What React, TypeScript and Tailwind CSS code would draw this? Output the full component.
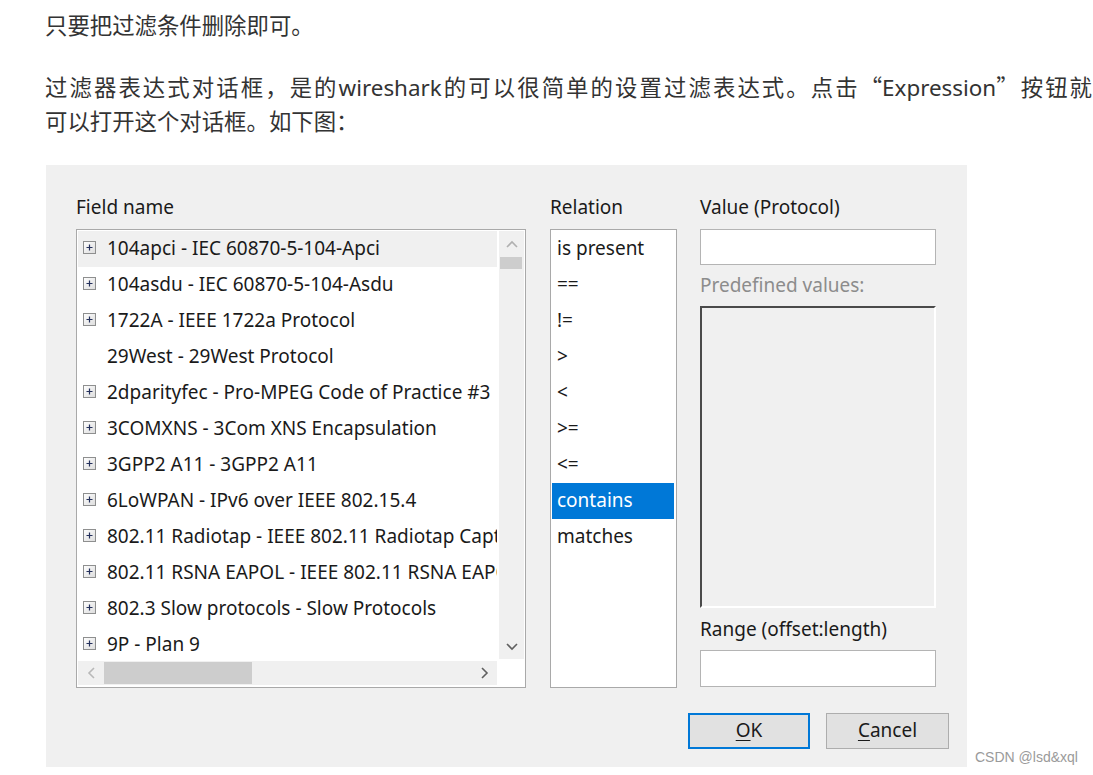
import React from "react";

const fields = [
  { name: "104apci - IEC 60870-5-104-Apci", tree: true },
  { name: "104asdu - IEC 60870-5-104-Asdu", tree: true },
  { name: "1722A - IEEE 1722a Protocol", tree: true },
  { name: "29West - 29West Protocol", tree: false },
  { name: "2dparityfec - Pro-MPEG Code of Practice #3", tree: true },
  { name: "3COMXNS - 3Com XNS Encapsulation", tree: true },
  { name: "3GPP2 A11 - 3GPP2 A11", tree: true },
  { name: "6LoWPAN - IPv6 over IEEE 802.15.4", tree: true },
  { name: "802.11 Radiotap - IEEE 802.11 Radiotap Capture header", tree: true },
  { name: "802.11 RSNA EAPOL - IEEE 802.11 RSNA EAPOL key dissection", tree: true },
  { name: "802.3 Slow protocols - Slow Protocols", tree: true },
  { name: "9P - Plan 9", tree: true },
];

const relations = ["is present", "==", "!=", ">", "<", ">=", "<=", "contains", "matches"];

function PlusBox() {
  return (
    <svg width="13" height="13" viewBox="0 0 13 13" className="shrink-0">
      <defs>
        <linearGradient id="pb" x1="0" y1="0" x2="1" y2="1">
          <stop offset="0" stopColor="#ffffff" />
          <stop offset="1" stopColor="#dcdcdc" />
        </linearGradient>
      </defs>
      <rect x="0.5" y="0.5" width="12" height="12" fill="url(#pb)" stroke="#8e8f8f" />
      <path d="M3.5 6.5H9.5M6.5 3.5V9.5" stroke="#24305c" strokeWidth="1.2" />
    </svg>
  );
}

function Chevron({ dir, color }: { dir: "up" | "down" | "left" | "right"; color: string }) {
  const d = {
    up: "M1 7L6 2L11 7",
    down: "M1 2L6 7L11 2",
    left: "M7 1L2 6L7 11",
    right: "M2 1L7 6L2 11",
  }[dir];
  const vertical = dir === "up" || dir === "down";
  return (
    <svg width={vertical ? 12 : 9} height={vertical ? 9 : 12} viewBox={vertical ? "0 0 12 9" : "0 0 9 12"}>
      <path d={d} fill="none" stroke={color} strokeWidth="1.6" />
    </svg>
  );
}

export default function App() {
  const cjk = { fontFamily: '"Noto Sans", "Noto Sans CJK SC", sans-serif' };
  return (
    <div className="h-[775px] w-[1093px] overflow-hidden bg-white pl-[45px] pt-[9px] text-[22.4px] leading-[34px] text-[#333]" style={cjk}>
      <p className="whitespace-nowrap">只要把过滤条件删除即可。</p>
      <p className="mt-[26px]">
        <span className="block w-[1047px] whitespace-nowrap text-justify [text-align-last:justify]">
          过滤器表达式对话框，是的wireshark的可以很简单的设置过滤表达式。点击<span className="font-['Noto_Sans_CJK_SC']">“</span>Expression<span className="font-['Noto_Sans_CJK_SC']">”</span>按钮就
        </span>
        <span className="block whitespace-nowrap">可以打开这个对话框。如下图：</span>
      </p>

      <div className="mt-[26px] flex items-end pl-px">
        {/* Dialog */}
        <div className="flex h-[602px] w-[921px] shrink-0 flex-col bg-[#f0f0f0] pl-[30px] pt-[30px] font-['Noto_Sans'] text-[19px] leading-[24px] text-[#1a1a1a]">
          <div className="flex">
            {/* Field name */}
            <div className="w-[450px]">
              <div className="h-[24px]">Field name</div>
              <div className="mt-[10px] h-[459px] border border-[#a9a9a9] bg-white p-px">
                <div className="flex h-[428px]">
                  <div className="h-[428px] w-[419px] overflow-hidden">
                    {fields.map((f, i) => (
                      <div
                        key={f.name}
                        className={`flex h-[36px] items-center gap-[11px] whitespace-nowrap pb-[3px] pl-[5px] ${i === 0 ? "bg-[#f0f0f0]" : ""}`}
                      >
                        {f.tree ? <PlusBox /> : <span className="w-[13px] shrink-0" />}
                        <span>{f.name}</span>
                      </div>
                    ))}
                  </div>
                  <div className="ml-[2px] flex h-[428px] w-[25px] flex-col bg-[#f0f0f0]">
                    <div className="flex h-[26px] items-center justify-center">
                      <Chevron dir="up" color="#b0b0b0" />
                    </div>
                    <div className="ml-px h-[12px] w-[22px] bg-[#cdcdcd]" />
                    <div className="flex-1" />
                    <div className="flex h-[26px] items-center justify-center">
                      <Chevron dir="down" color="#606060" />
                    </div>
                  </div>
                </div>
                <div className="mt-[2px] flex h-[24px] w-[419px] items-center bg-[#f0f0f0]">
                  <div className="flex w-[26px] justify-center">
                    <Chevron dir="left" color="#b8b8b8" />
                  </div>
                  <div className="h-[22px] w-[148px] bg-[#cdcdcd]" />
                  <div className="flex-1" />
                  <div className="flex w-[26px] justify-center">
                    <Chevron dir="right" color="#606060" />
                  </div>
                </div>
              </div>
            </div>

            {/* Relation */}
            <div className="ml-[24px] w-[127px]">
              <div className="h-[24px]">Relation</div>
              <div className="mt-[10px] h-[459px] border border-[#a9a9a9] bg-white py-px pl-px pr-[2px]">
                {relations.map((r) => (
                  <div
                    key={r}
                    className={`flex h-[36px] items-center pb-[3px] pl-[5px] ${r === "contains" ? "bg-[#0078d7] text-white" : ""}`}
                  >
                    {r}
                  </div>
                ))}
              </div>
            </div>

            {/* Value */}
            <div className="ml-[23px] flex w-[236px] flex-col">
              <div className="h-[24px]">Value (Protocol)</div>
              <div className="mt-[10px] h-[36px] border border-[#b4b4b4] bg-white" />
              <div className="mt-[8px] h-[24px] text-[#8c8c8c]">Predefined values:</div>
              <div className="mt-[9px] h-[302px] border-2 border-b-white border-l-[#4a4a4a] border-r-white border-t-[#4a4a4a] bg-[#f0f0f0]" />
              <div className="mt-[9px] h-[24px]">Range (offset:length)</div>
              <div className="mt-[9px] h-[37px] border border-[#b4b4b4] bg-white" />
            </div>
          </div>

          {/* Buttons */}
          <div className="mt-[25px] flex pl-[612px]">
            <div className="flex h-[36px] w-[122px] items-center justify-center border-2 border-[#0078d7] bg-[#e1e1e1] pb-[3px]">
              <span>
                <span className="underline underline-offset-[3px]">O</span>K
              </span>
            </div>
            <div className="ml-[16px] flex h-[36px] w-[123px] items-center justify-center border border-[#adadad] bg-[#e1e1e1] pb-[3px]">
              <span>
                <span className="underline underline-offset-[3px]">C</span>ancel
              </span>
            </div>
          </div>
        </div>

        {/* Watermark */}
        <div className="mb-[2px] ml-[8px] whitespace-nowrap font-['Liberation_Sans'] text-[14px] leading-[16px] text-[#9a9a9a]">
          CSDN @lsd&amp;xql
        </div>
      </div>
    </div>
  );
}
